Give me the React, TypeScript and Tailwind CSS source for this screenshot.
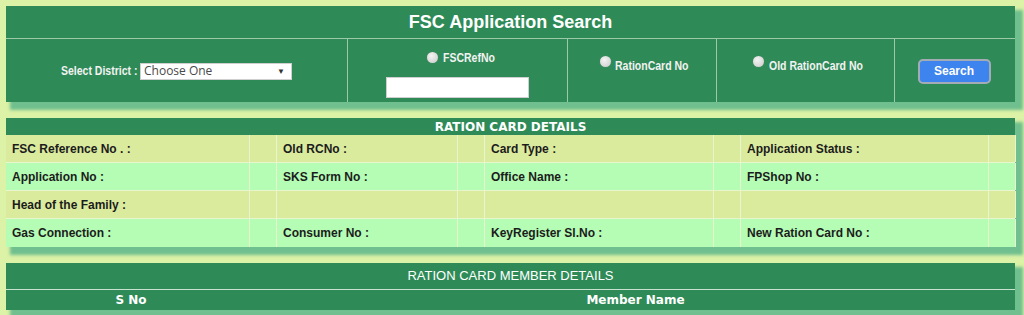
const arial = "font-['Liberation_Sans',Arial,sans-serif]";
const dejavu = "font-['DejaVu_Sans',Verdana,sans-serif]";

function Radio() {
  return (
    <span className="inline-block h-[11px] w-[11px] flex-none rounded-full bg-[radial-gradient(circle_at_40%_35%,#f4f4f4,#c9c9c9)] shadow-[0_0_1px_#888]" />
  );
}

// no narrow font installed, so squeeze Liberation Sans bold
function Narrow({ text, w }: { text: string; w: string }) {
  return (
    <span className={`inline-block whitespace-nowrap ${w}`}>
      <span className="inline-block origin-left scale-x-[0.84]">{text}</span>
    </span>
  );
}

const rows = [
  { bg: "bg-[#dbeb9e]", cells: ["FSC Reference No . :", "Old RCNo :", "Card Type :", "Application Status :"] },
  { bg: "bg-[#b5fdb5]", cells: ["Application No :", "SKS Form No :", "Office Name :", "FPShop No :"] },
  { bg: "bg-[#dbeb9e]", cells: ["Head of the Family :", "", "", ""] },
  { bg: "bg-[#b5fdb5]", cells: ["Gas Connection :", "Consumer No :", "KeyRegister Sl.No :", "New Ration Card No :"] },
];

const labelWidths = ["w-[243px]", "w-[180px]", "w-[228px]", "w-[247px]"];

export default function App() {
  return (
    <div className={`min-h-[315px] w-[1024px] overflow-hidden bg-[#dcf2a6] pt-[6px] pl-[6px] ${arial}`}>
      {/* search panel */}
      <div className="w-[1009px] bg-[#2e8b57] shadow-[6px_6px_3px_2px_#70bf8f]">
        <div className="flex h-[33px] items-center justify-center border-b border-[#9ccaa9] text-[18px] font-bold text-white">
          FSC Application Search
        </div>
        <div className="flex h-[63px] text-[12.5px] font-bold text-[#f2f2f2]">
          <div className="flex w-[341px] items-center justify-center gap-[4px] pt-[1px]">
            <Narrow text="Select District :" w="w-[75px]" />
            <div className="flex h-[17px] w-[152px] items-center justify-between border border-[#cfcfcf] bg-white pl-[3px] pr-[6px] font-['Open_Sans',sans-serif] text-[12px] font-normal text-[#4a4a4a]">
              <span>Choose One</span>
              <span className="text-[8px] text-[#333]">▼</span>
            </div>
          </div>
          <div className="flex w-[220px] flex-col items-center border-l border-[#9ccaa9] pt-[8px]">
            <div className="flex items-center gap-[5px] pl-[5px]">
              <Radio />
              <span className="mt-[2px]">
                <Narrow text="FSCRefNo" w="w-[50px]" />
              </span>
            </div>
            <div className="mt-[9px] h-[21px] w-[143px] border border-[#cfcfcf] bg-white" />
          </div>
          <div className="flex w-[149px] items-start justify-center gap-[4px] border-l border-[#9ccaa9] pt-[17px] pl-[5px]">
            <Radio />
            <span className="mt-[1px]">
              <Narrow text="RationCard No" w="w-[74px]" />
            </span>
          </div>
          <div className="flex w-[178px] items-start justify-center gap-[5px] border-l border-[#9ccaa9] pt-[17px] pl-[4px]">
            <Radio />
            <span className="mt-[1px]">
              <Narrow text="Old RationCard No" w="w-[94px]" />
            </span>
          </div>
          <div className="flex w-[121px] items-center justify-center border-l border-[#9ccaa9] pt-[1px] pr-[2px]">
            <button className="flex h-[25px] w-[73px] items-center justify-center rounded-[5px] border-2 border-[#a3abb5] bg-[#3d84ee] text-[12px] font-bold text-white">
              Search
            </button>
          </div>
        </div>
      </div>

      {/* ration card details */}
      <div className="mt-[16px] w-[1009px] shadow-[6px_6px_3px_2px_#70bf8f]">
        <div className={`flex h-[17px] items-center justify-center bg-[#2e8b57] text-[12px] font-bold text-white ${dejavu}`}>
          RATION CARD DETAILS
        </div>
        {rows.map((row, i) => (
          <div key={i} className={`flex h-[28px] text-[12px] font-bold text-[#1c1c1c] ${row.bg} ${i < 3 ? "border-b border-[#e9f5cd]" : ""}`}>
            {row.cells.map((c, j) => (
              <div key={j} className="flex">
                <div className={`flex items-center pl-[6px] ${labelWidths[j]}`}>{c}</div>
                <div className="w-[28px] border-x border-[#e9f5cd]" />
              </div>
            ))}
          </div>
        ))}
      </div>

      {/* member details */}
      <div className="mt-[16px] w-[1009px] bg-[#2e8b57] shadow-[6px_6px_3px_2px_#70bf8f]">
        <div className="flex h-[27px] items-center justify-center border-b border-[#c9e2d0] text-[13px] text-white">
          RATION CARD MEMBER DETAILS
        </div>
        <div className={`flex h-[20px] items-center text-[12px] font-bold text-white ${dejavu}`}>
          <div className="w-[250px] text-center">S No</div>
          <div className="flex-1 text-center">Member Name</div>
        </div>
      </div>
    </div>
  );
}
